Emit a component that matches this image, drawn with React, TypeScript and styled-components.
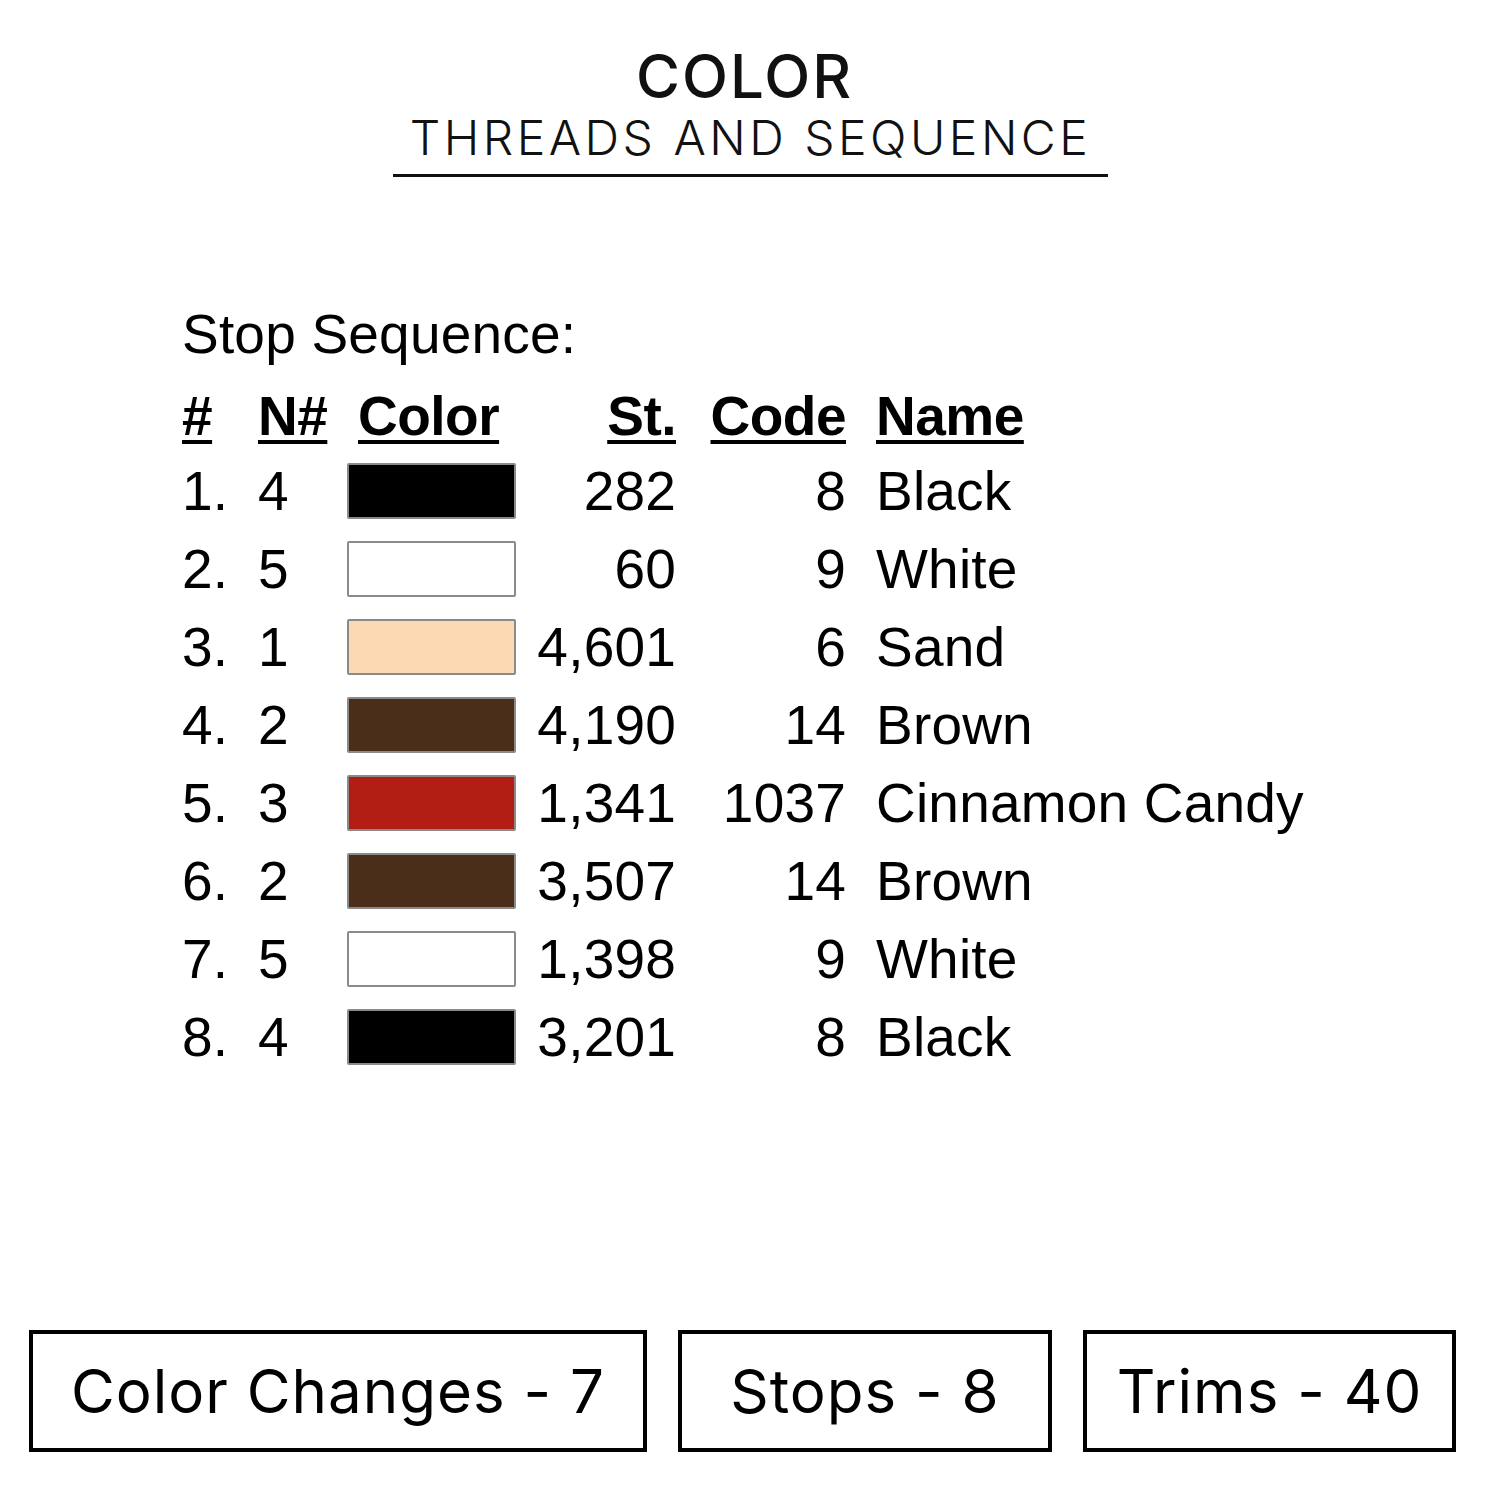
import styled, { createGlobalStyle } from 'styled-components';

const GlobalStyle = createGlobalStyle`
  html, body {
    margin: 0;
    padding: 0;
    background: #ffffff;
  }
`;

interface Stop {
  id: number;
  needle: number;
  color: string;
  stitches: string;
  code: string;
  name: string;
}

const stops: Stop[] = [
  { id: 1, needle: 4, color: '#000000', stitches: '282', code: '8', name: 'Black' },
  { id: 2, needle: 5, color: '#ffffff', stitches: '60', code: '9', name: 'White' },
  { id: 3, needle: 1, color: '#fdd9b3', stitches: '4,601', code: '6', name: 'Sand' },
  { id: 4, needle: 2, color: '#4a2e19', stitches: '4,190', code: '14', name: 'Brown' },
  { id: 5, needle: 3, color: '#b21e13', stitches: '1,341', code: '1037', name: 'Cinnamon Candy' },
  { id: 6, needle: 2, color: '#4a2e19', stitches: '3,507', code: '14', name: 'Brown' },
  { id: 7, needle: 5, color: '#ffffff', stitches: '1,398', code: '9', name: 'White' },
  { id: 8, needle: 4, color: '#000000', stitches: '3,201', code: '8', name: 'Black' },
];

const stats = [
  { id: 1, label: 'Color Changes - 7', width: 618 },
  { id: 2, label: 'Stops - 8', width: 374 },
  { id: 3, label: 'Trims - 40', width: 373 },
];

function App() {
  const rows = stops.map((stop) => (
    <Row key={stop.id}>
      <Cell>{stop.id}.</Cell>
      <Cell>{stop.needle}</Cell>
      <Cell>
        <Swatch $fill={stop.color} />
      </Cell>
      <Cell $right>{stop.stitches}</Cell>
      <Cell $right>{stop.code}</Cell>
      <Cell $name>{stop.name}</Cell>
    </Row>
  ));

  const statBoxes = stats.map((stat) => (
    <StatBox key={stat.id} $width={stat.width}>
      {stat.label}
    </StatBox>
  ));

  return (
    <Page>
      <GlobalStyle />
      <Header>
        <Title>COLOR</Title>
        <Subtitle>THREADS AND SEQUENCE</Subtitle>
      </Header>

      <Sheet>
        <SheetTitle>Stop Sequence:</SheetTitle>
        <HeadRow>
          <HeadCell>#</HeadCell>
          <HeadCell>N#</HeadCell>
          <HeadCell $indent>Color</HeadCell>
          <HeadCell $right>St.</HeadCell>
          <HeadCell $right>Code</HeadCell>
          <HeadCell $name>Name</HeadCell>
        </HeadRow>
        {rows}
      </Sheet>

      <StatsBar>{statBoxes}</StatsBar>
    </Page>
  );
}

const Page = styled.div`
  width: 1500px;
  height: 1500px;
  background: #ffffff;
  display: flex;
  flex-direction: column;
  color: #000;
`;

const Header = styled.div`
  display: flex;
  flex-direction: column;
  align-items: center;
  padding-top: 44px;
  padding-left: 1px;
`;

const Title = styled.h1`
  margin: 0 0 0 -12px;
  font-family: Inter, 'DejaVu Sans', sans-serif;
  font-weight: 500;
  font-size: 60px;
  line-height: 64px;
  letter-spacing: 2px;
  color: #111;
`;

const Subtitle = styled.h2`
  margin: 0;
  padding: 4px 0 10px;
  width: 715px;
  box-sizing: border-box;
  text-align: center;
  font-family: Inter, 'DejaVu Sans', sans-serif;
  font-weight: 300;
  font-size: 48px;
  line-height: 52px;
  letter-spacing: 3.5px;
  color: #111;
  border-bottom: 3px solid #111;
`;

const Sheet = styled.div`
  display: flex;
  flex-direction: column;
  padding: 127px 0 0 182px;
  font-family: 'Liberation Sans', Arial, sans-serif;
  font-size: 55px;
  letter-spacing: 0.2px;
`;

const SheetTitle = styled.div`
  height: 76px;
  line-height: 60px;
`;

const columns = `
  display: grid;
  grid-template-columns: 76px 89px 169px 160px 170px auto;
  align-items: center;
`;

const HeadRow = styled.div`
  ${columns}
  height: 72px;
`;

const Row = styled.div`
  ${columns}
  height: 78px;
`;

const HeadCell = styled.div<{ $right?: boolean; $name?: boolean; $indent?: boolean }>`
  font-weight: 700;
  text-decoration: underline;
  text-decoration-thickness: 4px;
  text-underline-offset: 5px;
  text-align: ${(p) => (p.$right ? 'right' : 'left')};
  padding-left: ${(p) => (p.$name ? '30px' : p.$indent ? '11px' : '0')};
  letter-spacing: -0.5px;
`;

const Cell = styled.div<{ $right?: boolean; $name?: boolean }>`
  text-align: ${(p) => (p.$right ? 'right' : 'left')};
  padding-left: ${(p) => (p.$name ? '30px' : '0')};
  white-space: nowrap;
  line-height: 60px;
`;

const Swatch = styled.div<{ $fill: string }>`
  width: 169px;
  height: 56px;
  box-sizing: border-box;
  background: ${(p) => p.$fill};
  border: 2px solid #8a8a8a;
  border-radius: 2px;
`;

const StatsBar = styled.div`
  margin-top: auto;
  margin-bottom: 48px;
  padding-left: 29px;
  display: flex;
  gap: 31px;
`;

const StatBox = styled.div<{ $width: number }>`
  width: ${(p) => p.$width}px;
  height: 122px;
  box-sizing: border-box;
  border: 4px solid #000;
  display: flex;
  align-items: center;
  justify-content: center;
  font-family: Inter, 'DejaVu Sans', sans-serif;
  font-size: 60px;
  font-weight: 400;
  letter-spacing: 1px;
  color: #000;
`;

export default App;
